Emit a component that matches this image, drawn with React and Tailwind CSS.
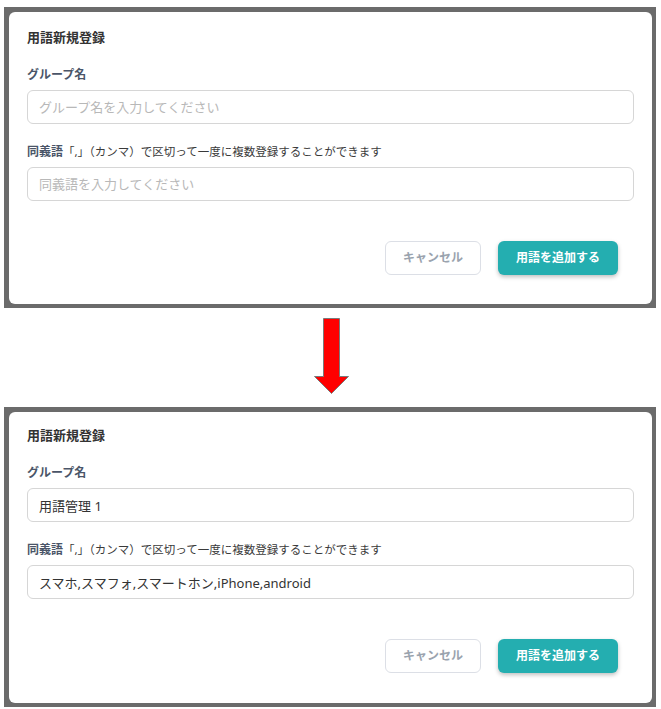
import React from 'react';

const font = { fontFamily: '"Noto Sans", "Noto Sans CJK JP", sans-serif' };

function Field({ label, hint, placeholder, value }) {
  return (
    <div>
      <div className="h-5 flex items-center text-[12px]">
        <span className="font-bold text-[#4a5568]">{label}</span>
        {hint && <span className="text-[11.5px] text-[#3a3a3a]">{hint}</span>}
      </div>
      <input
        readOnly
        value={value || ''}
        placeholder={placeholder}
        className="mt-[5px] w-full h-[34px] rounded-[6px] border border-[#d6d6d6] bg-white px-[11px] text-[13px] text-[#333] placeholder:text-[#b8b8b8] outline-none"
        style={font}
      />
    </div>
  );
}

function Panel({ group, synonyms, top }) {
  return (
    <div className="w-[652px] bg-[#6b6b6b] pl-[5px] pt-[5px] pr-[4px] pb-[4px]">
      <div className={`bg-white rounded-[6px] px-[18px] ${top ? 'pt-[16px] pb-[29px]' : 'pt-[14px] pb-[30px]'}`}>
        <div className="h-5 flex items-center text-[13px] font-bold text-[#333]">用語新規登録</div>
        <div className="mt-[17px]">
          <Field label="グループ名" placeholder="グループ名を入力してください" value={group} />
        </div>
        <div className="mt-[18px]">
          <Field
            label="同義語"
            hint="「,」（カンマ）で区切って一度に複数登録することができます"
            placeholder="同義語を入力してください"
            value={synonyms}
          />
        </div>
        <div className="mt-[40px] flex justify-end gap-[17px] pr-[16px]">
          <button className="w-[96px] h-[34px] rounded-[6px] border border-[#dcdfe6] bg-white text-[12px] font-bold text-[#9aa3ae]">
            キャンセル
          </button>
          <button className="w-[120px] h-[34px] rounded-[6px] bg-[#24aeb0] text-[12px] font-bold text-white shadow-[0_2px_4px_rgba(0,0,0,0.25)]">
            用語を追加する
          </button>
        </div>
      </div>
    </div>
  );
}

export default function App() {
  return (
    <div className="w-[661px] h-[709px] bg-white pt-[7px] pl-[4px]" style={font}>
      <Panel top />
      <div className="h-[99px] flex justify-center pr-[2px]">
        <svg width="36" height="78" viewBox="0 0 36 78" className="mt-[10px]">
          <polygon
            points="9.5,0.5 25.5,0.5 25.5,58.5 34.5,58.5 17.5,75.5 0.5,58.5 9.5,58.5"
            fill="#ff0000"
            stroke="#7a7a7a"
            strokeWidth="1"
          />
        </svg>
      </div>
      <Panel group="用語管理 1" synonyms="スマホ,スマフォ,スマートホン,iPhone,android" />
    </div>
  );
}
